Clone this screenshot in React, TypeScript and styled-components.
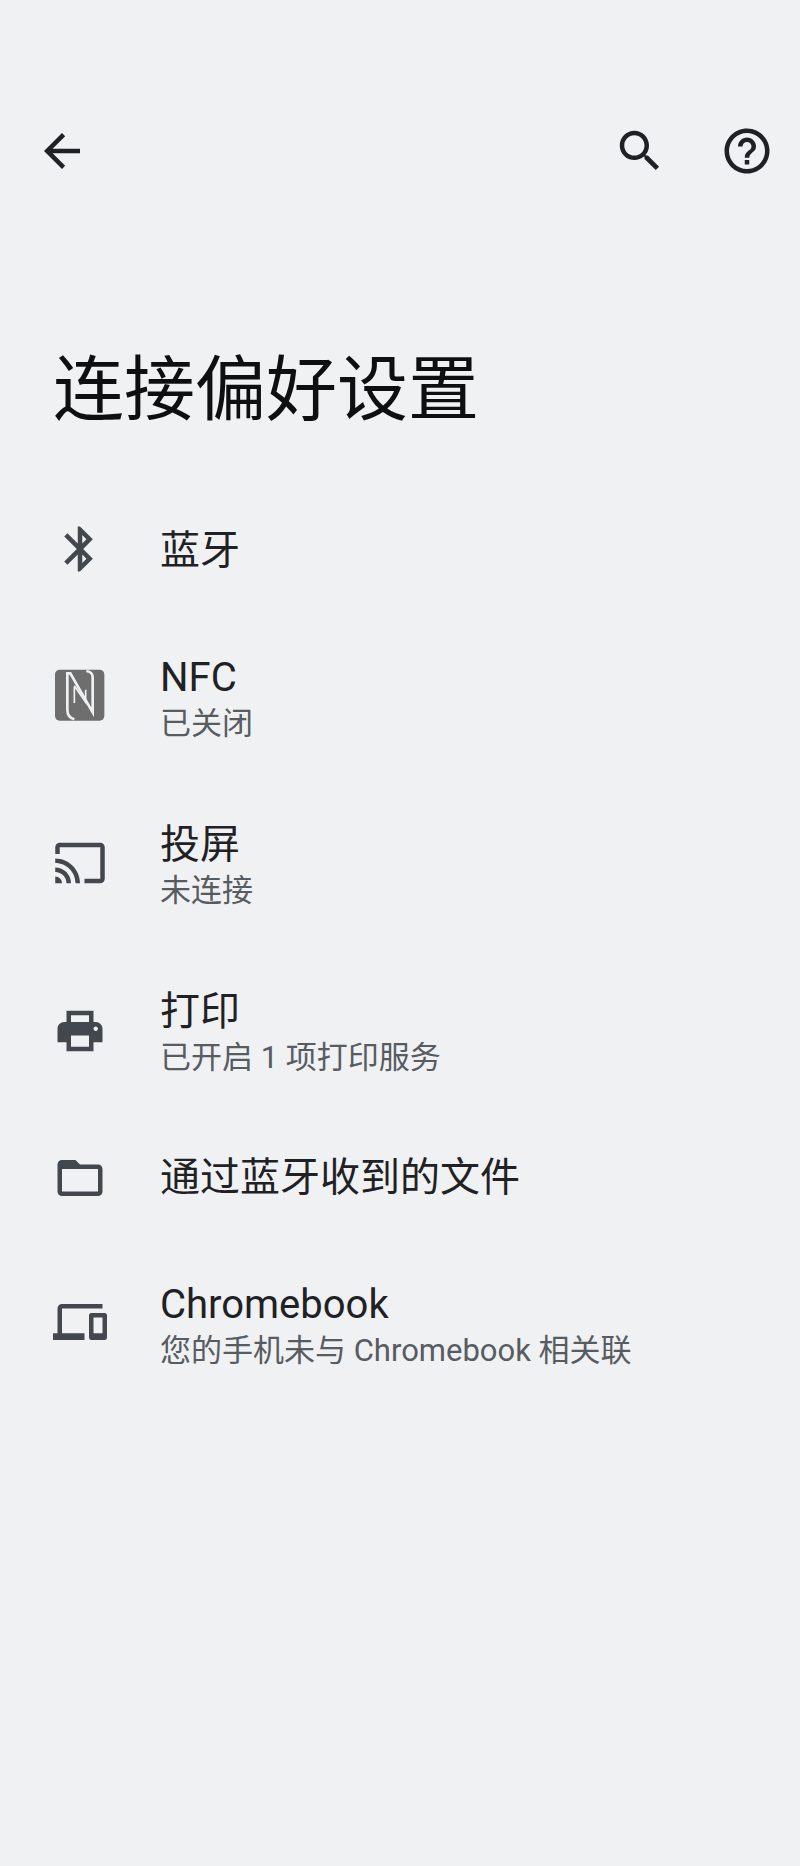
import React from "react";
import styled, { createGlobalStyle } from "styled-components";

const BG = "#f0f1f3";

const Global = createGlobalStyle`
  html, body { margin: 0; padding: 0; background: ${BG}; }
`;

const FONT = `Roboto, "Noto Sans CJK SC", sans-serif`;

const Page = styled.div`
  width: 800px;
  height: 1866px;
  background: ${BG};
  font-family: ${FONT};
  overflow: hidden;
  display: flex;
  flex-direction: column;
`;

const Toolbar = styled.header`
  display: flex;
  align-items: center;
  height: 54px;
  margin-top: 124px;
  padding: 0 26px 0 35px;
  color: #1f2125;
`;

const ToolIcon = styled.svg<{ $gap?: number }>`
  width: 54px;
  height: 54px;
  fill: currentColor;
  flex: none;
  margin-left: ${(p) => p.$gap ?? 0}px;
`;

const Spacer = styled.div`
  flex: 1;
`;

const Title = styled.h1`
  margin: 167px 0 0 53px;
  font-size: 71px;
  line-height: 90px;
  font-weight: 400;
  color: #0e0f11;
`;

const List = styled.div`
  display: flex;
  flex-direction: column;
  margin-top: 48px;
`;

const Row = styled.div<{ $h: number; $raise: number }>`
  box-sizing: border-box;
  display: flex;
  align-items: center;
  height: ${(p) => p.$h}px;
  padding-left: 53px;
  padding-bottom: ${(p) => p.$raise}px;
`;

const RowIcon = styled.svg<{ $lift: number }>`
  width: 54px;
  height: 54px;
  flex: none;
  fill: #42484e;
  margin-bottom: ${(p) => p.$lift}px;
`;

const NfcMark = styled.svg<{ $lift: number }>`
  width: 54px;
  height: 54px;
  flex: none;
  margin-bottom: ${(p) => p.$lift}px;
`;

const RowText = styled.div`
  display: flex;
  flex-direction: column;
  margin-left: 53px;
`;

const Primary = styled.div`
  font-size: 40px;
  line-height: 47px;
  color: #1f2125;
`;

const Secondary = styled.div`
  font-size: 31px;
  line-height: 46px;
  color: #575c61;
`;

type Item = { h: number; raise?: number; lift: number; icon?: string; nfc?: boolean; title: string; sub?: string };

const items: Item[] = [
  { h: 134, lift: 2, icon: "M17.71 7.71L12 2h-1v7.59L6.41 5 5 6.41 10.59 12 5 17.59 6.41 19 11 14.41V22h1l5.71-5.71-4.3-4.29 4.3-4.29zM13 5.83l1.88 1.88L13 9.59V5.83zm1.88 10.46L13 18.17v-3.76l1.88 1.88z", title: "蓝牙" },
  { h: 167, lift: 11, nfc: true, title: "NFC", sub: "已关闭" },
  { h: 167, lift: 10, icon: "M21 3H3c-1.1 0-2 .9-2 2v3h2V5h18v14h-7v2h7c1.1 0 2-.9 2-2V5c0-1.1-.9-2-2-2zM1 18v3h3c0-1.66-1.34-3-3-3zm0-4v2c2.76 0 5 2.24 5 5h2c0-3.87-3.13-7-7-7zm0-4v2c4.97 0 9 4.03 9 9h2c0-6.08-4.93-11-11-11z", title: "投屏", sub: "未连接" },
  { h: 167, lift: 8, icon: "M19 8h-1V3H6v5H5c-1.66 0-3 1.34-3 3v6h4v4h12v-4h4v-6c0-1.66-1.34-3-3-3zM8 5h8v3H8V5zm8 14H8v-5h8v5zm3-7c-.55 0-1-.45-1-1s.45-1 1-1 1 .45 1 1-.45 1-1 1z", title: "打印", sub: "已开启 1 项打印服务" },
  { h: 126, raise: 7, lift: 0, icon: "M20 6h-8l-2-2H4c-1.1 0-2 .9-2 2v12c0 1.1.9 2 2 2h16c1.1 0 2-.9 2-2V8c0-1.1-.9-2-2-2zm0 12H4V8h16v10z", title: "通过蓝牙收到的文件" },
  { h: 167, lift: 12, icon: "M4 6h18V4H4c-1.1 0-2 .9-2 2v11H0v3h14v-3H4V6zm19 2h-6c-.55 0-1 .45-1 1v10c0 .55.45 1 1 1h6c.55 0 1-.45 1-1V9c0-.55-.45-1-1-1zm-1 9h-4v-7h4v7z", title: "Chromebook", sub: "您的手机未与 Chromebook 相关联" },
];

export default function App() {
  return (
    <Page>
      <Global />
      <Toolbar>
        <ToolIcon viewBox="0 0 24 24"><path d="M20 11H7.83l5.59-5.59L12 4l-8 8 8 8 1.41-1.41L7.83 13H20v-2z" /></ToolIcon>
        <Spacer />
        <ToolIcon viewBox="0 0 24 24"><path d="M15.5 14h-.79l-.28-.27C15.41 12.59 16 11.11 16 9.5 16 5.91 13.09 3 9.5 3S3 5.91 3 9.5 5.91 16 9.5 16c1.61 0 3.09-.59 4.23-1.57l.27.28v.79l5 4.99L20.49 19l-4.99-5zm-6 0C7.01 14 5 11.99 5 9.5S7.01 5 9.5 5 14 7.01 14 9.5 11.99 14 9.5 14z" /></ToolIcon>
        <ToolIcon $gap={53} viewBox="0 0 24 24"><path d="M11 18h2v-2h-2v2zm1-16C6.48 2 2 6.48 2 12s4.48 10 10 10 10-4.48 10-10S17.52 2 12 2zm0 18c-4.41 0-8-3.59-8-8s3.59-8 8-8 8 3.59 8 8-3.59 8-8 8zm0-14c-2.21 0-4 1.79-4 4h2c0-1.1.9-2 2-2s2 .9 2 2c0 2-3 1.75-3 5h2c0-2.25 3-2.5 3-5 0-2.21-1.79-4-4-4z" /></ToolIcon>
      </Toolbar>
      <Title>连接偏好设置</Title>
      <List>
        {items.map((it) => (
          <Row key={it.title} $h={it.h} $raise={it.raise ?? 0}>
            {it.nfc ? (
              <NfcMark viewBox="24 27 162 162" $lift={it.lift}>
                <rect x="30" y="32" width="148" height="153" rx="14" fill="#6e6e6e" />
                <path
                  d="M88 181C72 176 67 166 67 152V43H76L143 160V54C143 44 136 38 124 36"
                  fill="none"
                  stroke={BG}
                  strokeWidth="8"
                />
                <path d="M88 80L122 130V92M88 84V132" fill="none" stroke={BG} strokeWidth="5" />
              </NfcMark>
            ) : (
              <RowIcon viewBox="0 0 24 24" $lift={it.lift}><path d={it.icon} /></RowIcon>
            )}
            <RowText>
              <Primary>{it.title}</Primary>
              {it.sub && <Secondary>{it.sub}</Secondary>}
            </RowText>
          </Row>
        ))}
      </List>
    </Page>
  );
}
